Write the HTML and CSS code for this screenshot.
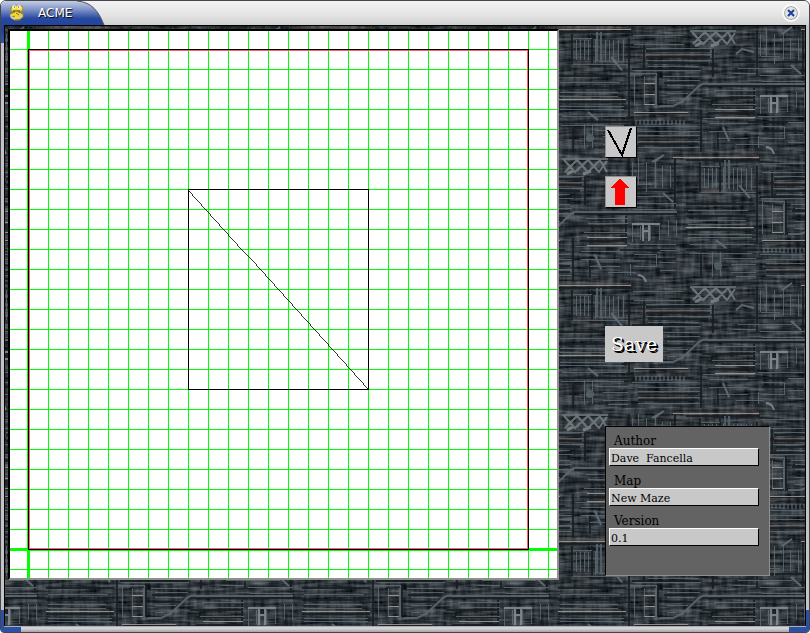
FILE: index.html
```html
<!DOCTYPE html>
<html lang="en">
<head>
    <meta charset="UTF-8">
    <meta name="viewport" content="width=device-width, initial-scale=1.0">
    <title>ACME</title>
    <link rel="stylesheet" href="styles.css">
</head>
<body>
    <div class="window">
        <header class="titlebar">
            <svg class="title-shape" width="106" height="43" viewBox="0 0 106 43" aria-hidden="true">
                <defs>
                    <linearGradient id="tab" x1="0" y1="0" x2="0" y2="1">
                        <stop offset="0" stop-color="#c3cee6"/>
                        <stop offset="0.2" stop-color="#8094c8"/>
                        <stop offset="0.42" stop-color="#2748a0"/>
                        <stop offset="0.7" stop-color="#1e419c"/>
                        <stop offset="1" stop-color="#3658ae"/>
                    </linearGradient>
                </defs>
                <path d="M1 43V4Q1 1 4 1H77C92 2 99 12 104 25H4V43Z" fill="url(#tab)"/>
                <path d="M77 1C92 2 99 12 104 25" fill="none" stroke="#56575c"/>
            </svg>
            <svg class="app-icon" width="16" height="18" viewBox="0 0 16 18" aria-hidden="true">
                <path d="M2 4Q2 1 5 2Q7 0 9 2Q14 1 14 5L13 7L9 8L14 10V13L10 16H5L3 14L6 12L2 13L1 10L4 9L6 8L2 7Z" fill="#f2dc30" stroke="#a68b20"/>
                <circle cx="5" cy="3" r="2" fill="#eee"/>
                <circle cx="10" cy="3" r="2" fill="#eee"/>
                <path d="M5 3h1M9 3h1M4 7h7" stroke="#4b3b12"/>
                <path d="M2 11Q2 15 6 14M12 11L9 14" fill="none" stroke="#c9c9c9" stroke-width="2"/>
                <path d="M7 9L10 11M6 16h6" stroke="#8e5a32"/>
            </svg>
            <h1 class="title">ACME</h1>
            <button class="close" type="button" aria-label="Close">
                <svg width="8" height="8" viewBox="0 0 8 8" aria-hidden="true">
                    <path d="M1 1L7 7M7 1L1 7" stroke="#1d3e9b" stroke-width="2"/>
                </svg>
            </button>
        </header>

        <main class="client">
            <svg class="texture" width="100%" height="100%" aria-hidden="true">
                <defs>
                    <filter id="streaks" x="0" y="0" width="100%" height="100%" color-interpolation-filters="sRGB">
                        <feTurbulence type="fractalNoise" baseFrequency="0.035 0.32" numOctaves="3" seed="8" stitchTiles="stitch"/>
                        <feColorMatrix values="0.7 0 0 0 -0.15  0.7 0.04 0 0 -0.14  0.7 0 0.04 0 -0.12  0 0 0 0 1"/>
                    </filter>
                    <filter id="posts" x="0" y="0" width="100%" height="100%" color-interpolation-filters="sRGB">
                        <feTurbulence type="fractalNoise" baseFrequency="0.22 0.05" numOctaves="2" seed="3" stitchTiles="stitch"/>
                        <feColorMatrix values="0.6 0 0 0 -0.12  0.6 0 0 0 -0.1  0.6 0 0 0 -0.08  0 0 0 0 0.4"/>
                    </filter>
                    <!-- one brick of the machine plating, 256 x 128 -->
                    <g id="brick" fill="none">
                        <g stroke="#161c1f" stroke-width="2">
                            <path d="M0 6H74M14 8V38M34 8V38M71 12V90M74 43H142M0 50H68M144 60H247M0 76H68M74 96H135M86 17V42M155 23V51M199 4V50M245 0V55M196 62V90M0 96H72M100 46V78M143 84V126M174 36H246M15 98V124M160 104V124M190 96H246"/>
                            <path d="M88 25H152M88 31H152M90 37H150M106 57H140M106 64H135M0 62H60M77 87H130M80 112H140M80 118H140M144 72H196M150 79H196M150 87H196M204 105H246"/>
                        </g>
                        <g stroke="#5d696f" stroke-width="1" shape-rendering="crispEdges">
                            <path d="M15 12H34M18 14V34M22 14V34M26 14V34M30 14V34M37 13V37M47 14V36M51 14V36M55 14V36M60 14V36M65 14V36M15 38H70"/>
                            <path d="M75 9H125M76 18H126M88 22H154M88 28H154M88 34H154M90 40H140M75 44H143"/>
                            <path d="M76 47V80M98 47V80M78 47H98M86 50V79M97 50V79M105 50H140M109 54H142M109 59H136M109 67H130M109 74H118"/>
                            <path d="M2 56H62M2 66H60M2 70H60M2 80H66M2 83H66M74 100H140M80 105H142M80 109H142M80 115H142M80 121H142"/>
                            <path d="M4 90H68M3 99H66M26 98V123M34 98V122M37 104H70M45 110H70M45 118H70M50 122H70"/>
                            <path d="M156 64H198M158 69H198M154 78H198M145 92H196M151 97H190M151 105H190M160 112H190M178 118H206M200 110V122"/>
                            <path d="M202 8V30M208 4V30M216 8V38M225 8V34M232 12V34M240 12V34M180 42H234M176 47H198M202 49H246M203 30H222M204 55H246"/>
                            <path d="M202 70V88M210 72V86M220 72V86M229 72V86M238 66V82M246 66V82M200 90H246M204 100H226M226 100V112H204M230 96H246M230 108H246M230 116H246"/>
                        </g>
                        <g stroke="#8a979b">
                            <path d="M-13 3H73M76 86H130M0 73H68M86 57H97M86 68H97M86 78H97M157 83H197M157 91H197" stroke="#a39d9a" shape-rendering="crispEdges"/>
                            <path d="M39 6V35M43 6V35" stroke="#56636a" stroke-width="2"/>
                            <path d="M115 80H102M115 80L124 76L142 59Q146 57 151 58H247" stroke="#5d696d" stroke-width="2"/>
                            <path d="M202 70H230M213 71V87M219 71V87M213 77H219" stroke="#858e90" stroke-width="2"/>
                            <path d="M30 86L40 94M165 101L171 115M178 28L184 23L196 26M233 39L243 48M53 31L64 44M224 8L234 1M94 136L104 130" stroke="#657277" stroke-width="2"/>
                            <path d="M208 121Q214 121 216 128" stroke="#858e90" stroke-width="2"/>
                            <circle cx="32" cy="112" r="4" fill="#56636a" stroke="none"/>
                            <path d="M78 94V99M82 94V99M86 94V99M90 94V99M94 94V99M98 94V99M102 94V99M106 94V99M110 94V99M114 94V99M118 94V99M122 94V99M126 94V99" stroke="#6b777c"/>
                            <path d="M132 5H178" stroke="#677376" stroke-width="2"/>
                            <path d="M134 6L145 18L158 6L169 18L177 7M135 18L147 6L158 18L170 6L177 18" stroke="#737f82" stroke-width="2"/>
                            <path d="M137 20L143 17M153 20L161 17" stroke="#7d8788" stroke-width="3"/>
                        </g>
                        <path d="M-13 2H73M88 29H150M76 113H130M15 38H40M160 90H190" stroke="#85564c" stroke-opacity="0.6"/>
                    </g>
                    <pattern id="plating" x="41" y="0" width="256" height="256" patternUnits="userSpaceOnUse">
                        <rect width="256" height="256" fill="#2a3236"/>
                        <rect width="256" height="256" filter="url(#streaks)"/>
                        <rect width="256" height="256" filter="url(#posts)"/>
                        <g opacity="0.85">
                            <use href="#brick"/>
                            <use href="#brick" x="256"/>
                            <use href="#brick" x="-128" y="128"/>
                            <use href="#brick" x="128" y="128"/>
                        </g>
                    </pattern>
                </defs>
                <rect width="100%" height="100%" fill="url(#plating)"/>
            </svg>

            <svg class="map" width="547" height="547" viewBox="10 31 547 547" shape-rendering="crispEdges" role="img" aria-label="Maze map">
                <defs>
                    <pattern id="grid" x="28" y="49" width="20" height="20" patternUnits="userSpaceOnUse">
                        <path d="M0 0H20V1H1V20H0Z" fill="#00ff00"/>
                    </pattern>
                </defs>
                <rect x="10" y="31" width="547" height="547" fill="#fff"/>
                <rect x="10" y="31" width="547" height="547" fill="url(#grid)"/>
                <!-- axes -->
                <rect x="27" y="31" width="3" height="547" fill="#00ff00"/>
                <rect x="10" y="548" width="547" height="3" fill="#00ff00"/>
                <!-- outer walls -->
                <rect x="28" y="50" width="500" height="499" fill="#fff"/>
                <rect x="28" y="50" width="500" height="499" fill="url(#grid)"/>
                <rect x="29.5" y="50.5" width="498" height="498" fill="none" stroke="#ff6060"/>
                <rect x="28.5" y="49.5" width="500" height="500" fill="none" stroke="#000"/>
                <!-- inner walls -->
                <rect x="188.5" y="189.5" width="180" height="200" fill="none" stroke="#000"/>
                <path d="M188.5 189.5L368.5 389.5" stroke="#000" stroke-width="0.8"/>
            </svg>

            <div class="tools">
                <button class="tool" type="button" aria-label="Draw wall">
                    <svg width="30" height="30" viewBox="0 0 30 30" shape-rendering="crispEdges" aria-hidden="true">
                        <path d="M2 3L16 28L25 1" fill="none" stroke="#000" stroke-width="2"/>
                    </svg>
                </button>
                <button class="tool" type="button" aria-label="Move up">
                    <svg width="30" height="30" viewBox="0 0 30 30" shape-rendering="crispEdges" aria-hidden="true">
                        <path d="M14 1L23 11H19V28H9V11H5Z" fill="#f00"/>
                    </svg>
                </button>
                <button class="save" type="button">Save</button>
                <form class="info">
                    <label for="author">Author</label>
                    <input type="text" id="author" value="Dave  Fancella">
                    <label for="map">Map</label>
                    <input type="text" id="map" value="New Maze">
                    <label for="version">Version</label>
                    <input type="text" id="version" value="0.1">
                </form>
            </div>
        </main>
        <footer class="grip"></footer>
    </div>
</body>
</html>
```
FILE: styles.css
```css
* {
    box-sizing: border-box;
}

body {
    margin: 0;
    background-color: #fff;
    font-family: "DejaVu Serif", serif;
    font-size: 12px;
    color: #000;
}

.window {
    display: flex;
    flex-direction: column;
    min-height: 100vh;
    padding: 0 3px;
    position: relative;
    background-color: #c4c4c6;
    border: 1px solid #45464a;
    border-radius: 6px 6px 4px 4px;
    overflow: hidden;
}

.titlebar {
    display: flex;
    align-items: center;
    height: 24px;
    margin: 0 -3px;
    padding: 0 9px 0 8px;
    background: linear-gradient(#f2f2f2, #e4e4e4 60%, #d0d0d0);
}

/* coloured tab lies behind the title and runs down the left frame */
.title-shape {
    position: absolute;
    top: -1px;
    left: -1px;
}

.app-icon {
    position: relative;
}

.title {
    position: relative;
    margin: 0 auto 0 13px;
    font-family: "DejaVu Sans", sans-serif;
    font-size: 12px;
    font-weight: normal;
    color: #fff;
    text-shadow: 1px 1px 1px #000;
}

.close {
    display: flex;
    align-items: center;
    justify-content: center;
    width: 18px;
    height: 18px;
    padding: 0;
    background-color: #e4e4e6;
    border: 2px solid #fafafa;
    border-radius: 50%;
    box-shadow: inset 0 0 0 1px #a0a0a0;
}

.client {
    display: flex;
    align-items: flex-start;
    flex: 1;
    gap: 46px;
    position: relative;
    padding: 3px;
    border: 1px solid #000;
    border-bottom: none;
    background-color: #2a3236;
}

.texture {
    position: absolute;
    inset: 0;
}

.map {
    position: relative;
    flex: none;
    box-sizing: content-box;
    border: 2px solid #000;
    border-right-color: #8f8f8f;
    border-bottom-color: #8f8f8f;
}

.tools {
    display: flex;
    flex-direction: column;
    align-items: flex-start;
    position: relative;
    padding-top: 97px;
}

.tool {
    width: 32px;
    height: 32px;
    margin-bottom: 18px;
    padding: 0;
    background-color: #c8c8c8;
    border: 1px solid #8f8f8f;
    border-right-color: #000;
    border-bottom-color: #000;
}

.tool svg {
    display: block;
}

.save {
    height: 36px;
    margin: 100px 0 64px;
    padding: 0 6px;
    background-color: #c8c8c8;
    border: none;
    font-family: "DejaVu Serif", serif;
    font-size: 19px;
    color: #fff;
    text-shadow: 1px 1px 0 #000, 2px 2px 0 #000;
}

.info {
    display: flex;
    flex-direction: column;
    width: 165px;
    height: 150px;
    padding: 7px 10px 0 3px;
    background-color: #636363;
    border: 1px solid #000;
    border-right-color: #8f8f8f;
    border-bottom-color: #8f8f8f;
}

.info label {
    padding: 0 5px;
    line-height: 14px;
}

.info input {
    width: 100%;
    height: 18px;
    margin-bottom: 8px;
    padding: 2px 1px 0;
    background-color: #c8c8c8;
    border: 1px solid #fff;
    border-right-color: #000;
    border-bottom-color: #000;
    font-family: "DejaVu Serif", serif;
    font-size: 11px;
    color: #000;
}

.grip {
    height: 6px;
    margin: 0 -3px;
    background: linear-gradient(#9c9c9e, #dcdcde 30%, #a4a4a6);
}

/* blue corners of the frame */
.grip::before,
.grip::after {
    content: "";
    position: absolute;
    bottom: 0;
    width: 17px;
    height: 17px;
    border: 0 solid #2c4fa8;
    border-bottom-width: 5px;
}

.grip::before {
    left: 0;
    border-left-width: 3px;
}

.grip::after {
    right: 0;
    border-right-width: 3px;
}
```
